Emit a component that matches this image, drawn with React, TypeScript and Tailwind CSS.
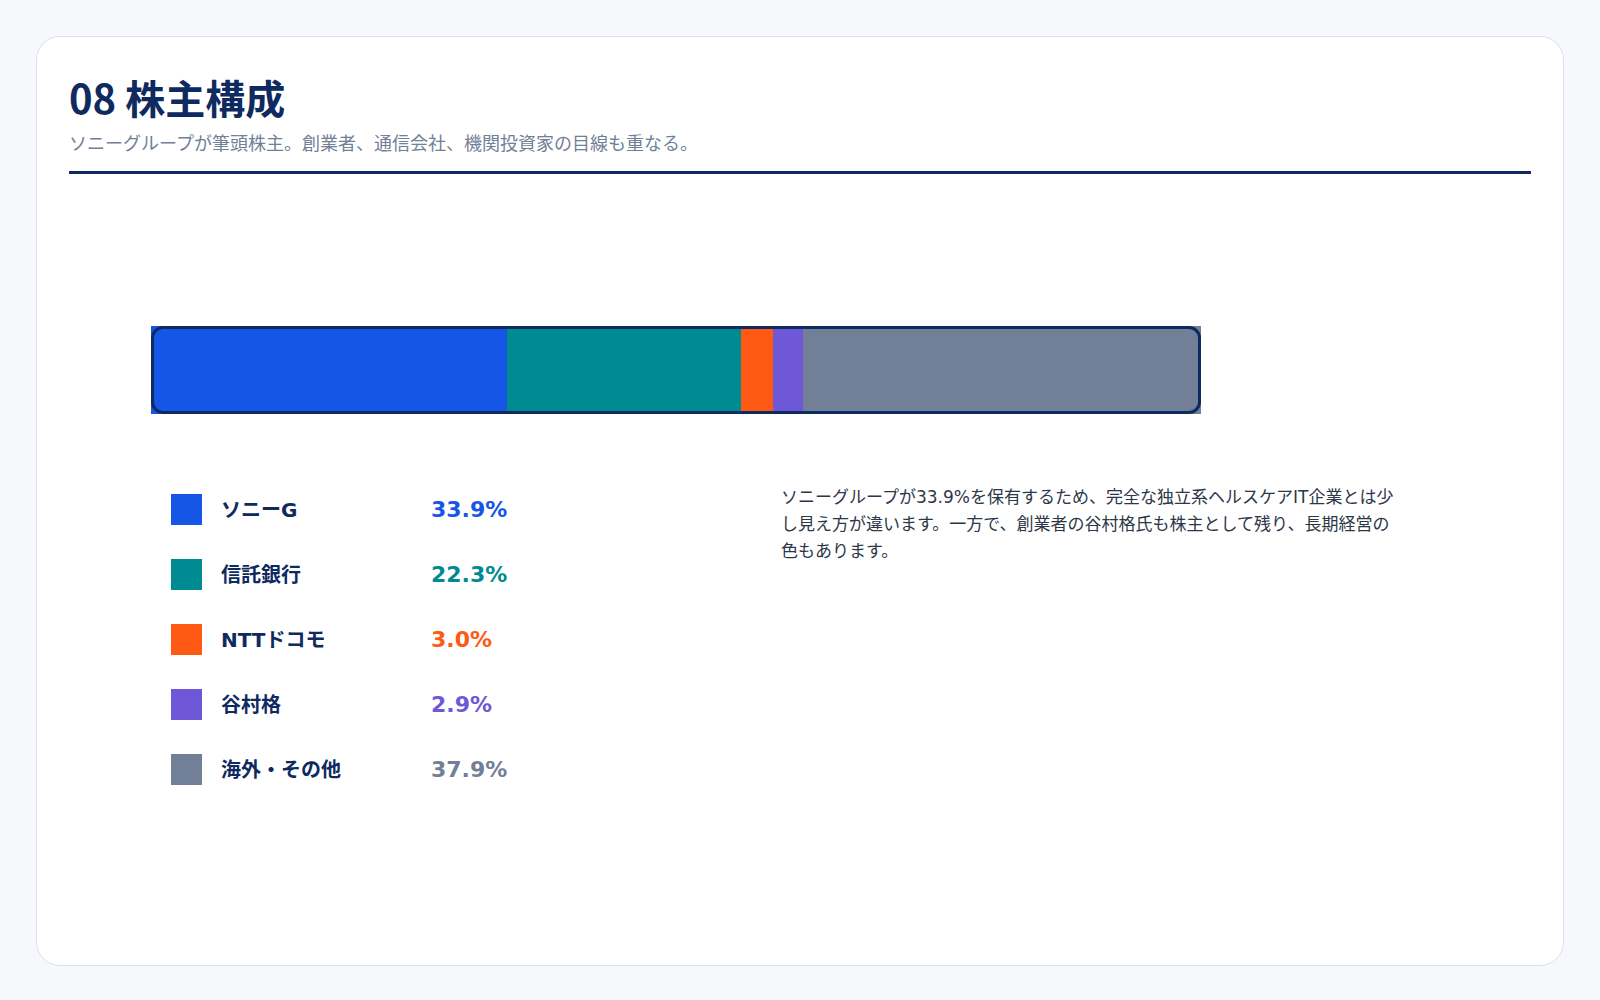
import React from "react";

const segs = [
  { label: "ソニーG", pct: 33.9, color: "#1656e6" },
  { label: "信託銀行", pct: 22.3, color: "#008b93" },
  { label: "NTTドコモ", pct: 3.0, color: "#ff5a14" },
  { label: "谷村格", pct: 2.9, color: "#6f58d8" },
  { label: "海外・その他", pct: 37.9, color: "#718096" },
];

export default function App() {
  return (
    <div className="min-h-[1000px] w-[1600px] bg-[#f6f8fb] p-[36px]" style={{ fontFamily: '"DejaVu Sans", "Noto Sans CJK JP", sans-serif' }}>
      <div className="h-[930px] rounded-[24px] border border-[#d8e1ee] bg-white px-[32px] pt-[30px]">
        <h1 className="text-[40px] font-bold leading-[60px] text-[#0f2a5f]" style={{ fontFamily: '"Noto Sans CJK JP", sans-serif' }}>08 株主構成</h1>
        <p className="mt-[2px] text-[18px] leading-[26px] text-[#718096]" style={{ fontFamily: '"Noto Sans CJK JP", sans-serif' }}>ソニーグループが筆頭株主。創業者、通信会社、機関投資家の目線も重なる。</p>
        <div className="mt-[16px] h-[3px] bg-[#0f2a5f]" />
        <div className="ml-[82px] mt-[152px] relative flex h-[88px] w-[1050px]">
          {segs.map((s) => (
            <div key={s.label} style={{ width: `${s.pct}%`, backgroundColor: s.color }} />
          ))}
          <div className="absolute inset-0 rounded-[12px] border-[3px] border-[#0f2a5f]" />
        </div>
        <div className="mt-[80px] flex">
          <div className="ml-[102px] flex w-[610px] flex-col gap-[34px]">
            {segs.map((s) => (
              <div key={s.label} className="flex h-[31px] items-center">
                <div className="h-[31px] w-[31px]" style={{ backgroundColor: s.color }} />
                <div className="ml-[19px] w-[210px] text-[20px] font-bold text-[#0f2a5f]">{s.label}</div>
                <div className="text-[22px] font-bold" style={{ color: s.color }}>{s.pct.toFixed(1)}%</div>
              </div>
            ))}
          </div>
          <p className="-mt-[10px] w-[625px] text-[17px] leading-[27px] text-[#2d3748]">
            ソニーグループが33.9%を保有するため、完全な独立系ヘルスケアIT企業とは少し見え方が違います。一方で、創業者の谷村格氏も株主として残り、長期経営の色もあります。
          </p>
        </div>
      </div>
    </div>
  );
}
